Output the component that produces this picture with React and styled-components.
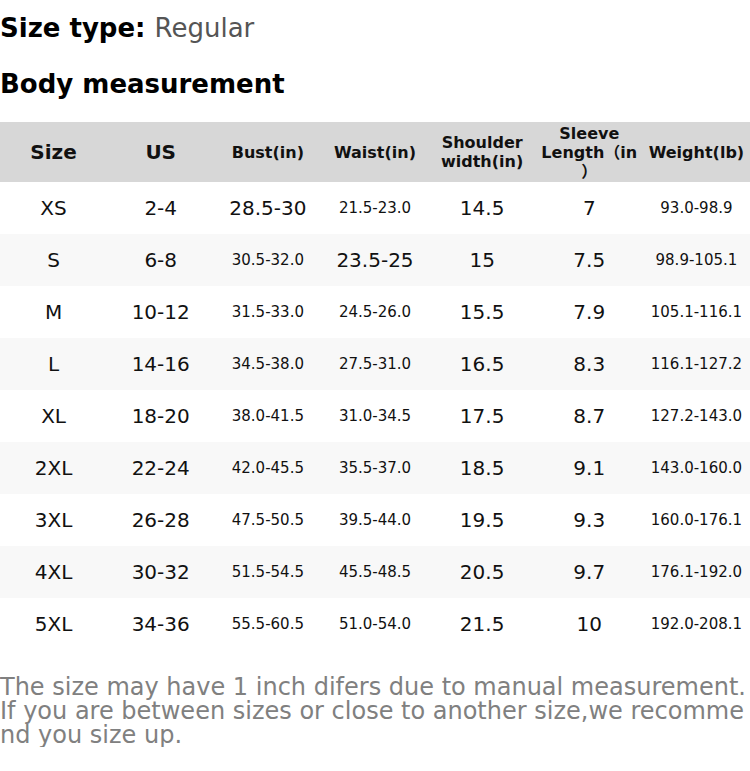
import styled, { createGlobalStyle } from "styled-components";

const GlobalStyle = createGlobalStyle`
  body {
    margin: 0;
    background: #fff;
    font-family: "DejaVu Sans", "Noto Sans CJK SC", sans-serif;
    color: #000;
  }
`;

const columns = [
  { label: "Size", big: true },
  { label: "US", big: true },
  { label: "Bust(in)" },
  { label: "Waist(in)" },
  { label: "Shoulder width(in)" },
  { label: "Sleeve\nLength（in\n）" },
  { label: "Weight(lb)" },
];

const rows = [
  ["XS", "2-4", "28.5-30", "21.5-23.0", "14.5", "7", "93.0-98.9"],
  ["S", "6-8", "30.5-32.0", "23.5-25", "15", "7.5", "98.9-105.1"],
  ["M", "10-12", "31.5-33.0", "24.5-26.0", "15.5", "7.9", "105.1-116.1"],
  ["L", "14-16", "34.5-38.0", "27.5-31.0", "16.5", "8.3", "116.1-127.2"],
  ["XL", "18-20", "38.0-41.5", "31.0-34.5", "17.5", "8.7", "127.2-143.0"],
  ["2XL", "22-24", "42.0-45.5", "35.5-37.0", "18.5", "9.1", "143.0-160.0"],
  ["3XL", "26-28", "47.5-50.5", "39.5-44.0", "19.5", "9.3", "160.0-176.1"],
  ["4XL", "30-32", "51.5-54.5", "45.5-48.5", "20.5", "9.7", "176.1-192.0"],
  ["5XL", "34-36", "55.5-60.5", "51.0-54.0", "21.5", "10", "192.0-208.1"],
];

export default function App() {
  return (
    <Page>
      <GlobalStyle />
      <SizeType>
        Size type: <span>Regular</span>
      </SizeType>
      <Heading>Body measurement</Heading>
      <Table>
        <HeadRow>
          {columns.map((c) => (
            <HeadCell key={c.label} $big={c.big}>
              {c.label}
            </HeadCell>
          ))}
        </HeadRow>
        {rows.map((row, i) => (
          <Row key={row[0]} $alt={i % 2 === 1}>
            {row.map((v, j) => (
              <Cell key={j} $small={v.length > 7}>
                {v}
              </Cell>
            ))}
          </Row>
        ))}
      </Table>
      <Note>
        The size may have 1 inch difers due to manual measurement. If you are
        between sizes or close to another size,we recommend you size up.
      </Note>
    </Page>
  );
}

const Page = styled.div({
  width: 750,
});

const SizeType = styled.h2({
  margin: 0,
  padding: "10px 0 0",
  fontSize: 26,
  lineHeight: "36px",
  fontWeight: 700,
  "& > span": {
    fontWeight: 400,
    color: "#555",
  },
});

const Heading = styled.h3({
  margin: 0,
  padding: "20px 0 20px",
  fontSize: 26,
  lineHeight: "36px",
  fontWeight: 700,
});

const Table = styled.div({
  display: "flex",
  flexDirection: "column",
});

const HeadRow = styled.div({
  display: "grid",
  gridTemplateColumns: "repeat(7, 1fr)",
  height: 60,
  alignItems: "center",
  background: "#d7d7d7",
});

const HeadCell = styled.div((p) => ({
  textAlign: "center",
  fontWeight: 700,
  fontSize: p.$big ? 20 : 16,
  lineHeight: "19px",
  color: "#111",
  whiteSpace: "pre-line",
}));

const Row = styled.div((p) => ({
  display: "grid",
  gridTemplateColumns: "repeat(7, 1fr)",
  height: 52,
  alignItems: "center",
  background: p.$alt ? "#f8f8f8" : "#fff",
}));

const Cell = styled.div((p) => ({
  textAlign: "center",
  fontSize: p.$small ? 15 : 20,
  color: "#111",
}));

const Note = styled.p({
  margin: "25px 0 0",
  fontSize: 24,
  lineHeight: "24px",
  color: "#808080",
  wordBreak: "break-all",
});
